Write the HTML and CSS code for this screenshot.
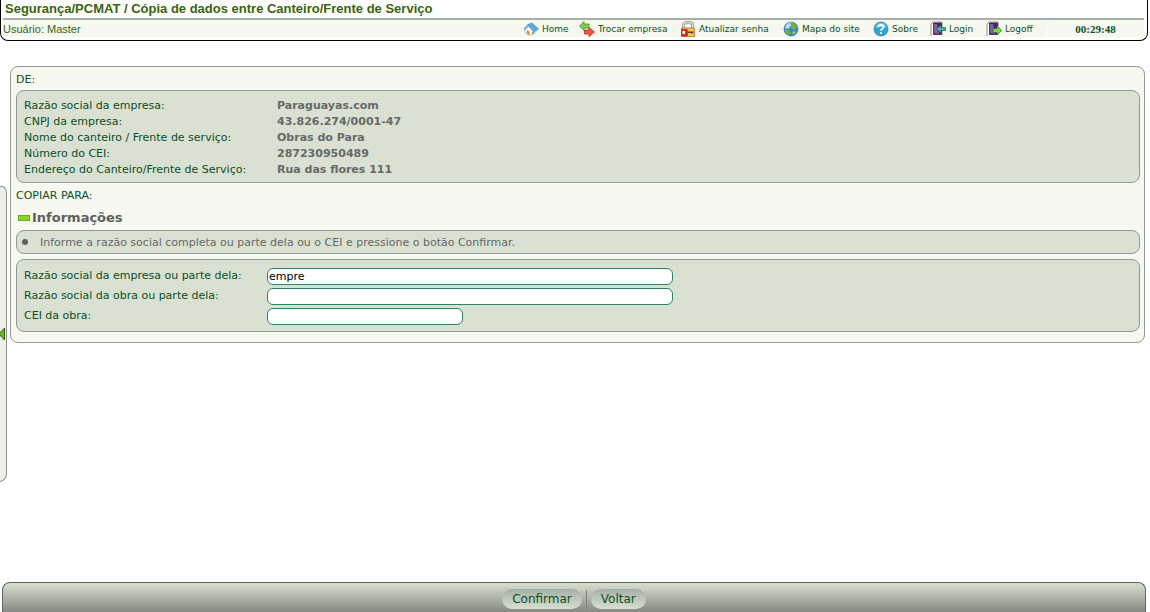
FILE: index.html
```html
<!DOCTYPE html>
<html lang="pt-BR">
<head>
<meta charset="utf-8">
<title>Segurança/PCMAT</title>
<link rel="stylesheet" href="styles.css">
</head>
<body>
<header class="header">
  <h1 class="title">Segurança/PCMAT / Cópia de dados entre Canteiro/Frente de Serviço</h1>
  <div class="toolbar">
    <span class="user">Usuário: Master</span>
    <nav class="menu">
      <a href="#"><svg class="icon" viewBox="0 0 16 16"><path fill="#f1f3f2" stroke="#a9adb0" stroke-width=".6" d="M2 7.500l4-2 7 2v4l-6 3-5-3z"/><path fill="#5fa9dc" stroke="#3b80b5" stroke-width=".6" d="M5 3.500l4-1.500 6.500 6-5 3z"/><path fill="#8cc6ea" stroke="#3b80b5" stroke-width=".6" d="M5 3.500L.8 8l1.200.6L5.500 5z"/><path fill="#d99443" d="M4 9l2.500 1.500v4L4 13z"/><path fill="#6d95b5" d="M9 11.500l2-1v2l-2 1z"/></svg>Home</a>
      <a href="#"><svg class="icon" viewBox="0 0 16 16"><path fill="#7fcc45" stroke="#3f942c" stroke-width=".8" d="M.5 5L5 .5V3h5v4H5v2.500z"/><path fill="#f0554b" stroke="#c9291f" stroke-width=".8" d="M5.500 9H10V6.500l5.500 4.500-5.500 4.500V13H5.500z"/></svg>Trocar empresa</a>
      <a href="#"><svg class="icon" viewBox="0 0 16 16"><path fill="none" stroke="#8d8d8d" stroke-width="2.800" d="M3.500 8V4q0-2.500 4.500-2.500T12.500 4v4"/><path fill="none" stroke="#dedede" stroke-width="1.400" d="M3.500 8V4q0-2.500 4.500-2.500T12.500 4v4"/><path fill="#f5c55a" stroke="#a7772b" stroke-width=".8" d="M1.500 7h13v8.500h-13z"/><path fill="#d72f22" d="M1 8h6l1 1.500v5L7 15.500H1z"/><path fill="#fff" d="M2.500 10H5v3H2.500z"/><path fill="#6b3b20" d="M8 10.500h5.500V12h-1v1h-1v-1H8z"/></svg>Atualizar senha</a>
      <a href="#"><svg class="icon" viewBox="0 0 16 16"><circle cx="8" cy="8" r="7" fill="#3b83d6" stroke="#2c61a8" stroke-width=".6"/><path fill="#b7dcf7" d="M3 4q3-4 7-2L8 5 5 8 2 7z"/><path fill="#6eb536" d="M7 2q5-1 7 4l-2 3-3-1-1-3zM2 8l4 1 2 3-2 2.500Q2 13 2 8z"/><path fill="#8fcf4a" d="M10 10l3 1-2 2.500-2-1z"/></svg>Mapa do site</a>
      <a href="#"><svg class="icon" viewBox="0 0 16 16"><circle cx="8" cy="8" r="7" fill="#2aa5d8" stroke="#2580b4" stroke-width=".7"/><path fill="#79cdec" d="M2.500 7q1-5 5.500-5t5.500 5q-6-2-11 0z"/><path fill="none" stroke="#fff" stroke-width="1.800" d="M5.500 6q0-2 2.500-2t2.500 2q0 1-1.500 2-1 .6-1 1.800"/><circle cx="8" cy="12" r="1.100" fill="#fff"/></svg>Sobre</a>
      <a href="#"><svg class="icon" viewBox="0 0 16 16"><path fill="#fff" stroke="#777" stroke-width=".8" d="M1 15V3l2-2h9v13"/><path fill="#49275f" stroke="#24152e" stroke-width=".7" d="M3.500 2h8v11.500h-8z"/><path fill="#845aa0" d="M4 3h3l2 10-5-1z"/><path fill="#55b1a3" stroke="#1c665c" stroke-width=".8" d="M6.500 8L11 4v2.500h4.500v3H11V12z"/></svg>Login</a>
      <a href="#"><svg class="icon" viewBox="0 0 16 16"><path fill="#fff" stroke="#777" stroke-width=".8" d="M1 15V3l2-2h9v13"/><path fill="#49275f" stroke="#24152e" stroke-width=".7" d="M3.500 2h8v11.500h-8z"/><path fill="#845aa0" d="M4 3h3l2 10-5-1z"/><path fill="#79d83c" stroke="#26751b" stroke-width=".8" d="M15.500 9.500L11 5v2.500H7v4h4V14z"/></svg>Logoff</a>
    </nav>
    <time class="clock">00:29:48</time>
  </div>
</header>

<button class="drawer" type="button" aria-label="Abrir menu"><svg class="arrow" viewBox="0 0 5 12"><path fill="#6cb829" stroke="#36551d" d="M4.500 0v12L-1 6z"/></svg></button>

<main class="card">
  <h2 class="caption">DE:</h2>
  <dl class="panel details">
    <dt>Razão social da empresa:</dt><dd>Paraguayas.com</dd>
    <dt>CNPJ da empresa:</dt><dd>43.826.274/0001-47</dd>
    <dt>Nome do canteiro / Frente de serviço:</dt><dd>Obras do Para</dd>
    <dt>Número do CEI:</dt><dd>287230950489</dd>
    <dt>Endereço do Canteiro/Frente de Serviço:</dt><dd>Rua das flores 111</dd>
  </dl>
  <h2 class="caption">COPIAR PARA:</h2>
  <h3 class="info"><span class="dash"></span>Informações</h3>
  <ul class="panel notes">
    <li>Informe a razão social completa ou parte dela ou o CEI e pressione o botão Confirmar.</li>
  </ul>
  <form class="panel form" id="busca">
    <label for="empresa">Razão social da empresa ou parte dela:</label><input id="empresa" type="text" value="empre">
    <label for="obra">Razão social da obra ou parte dela:</label><input id="obra" type="text">
    <label for="cei">CEI da obra:</label><input class="short" id="cei" type="text">
  </form>
</main>

<footer class="actions">
  <button class="action" type="submit" form="busca">Confirmar</button>
  <span class="divider"></span>
  <button class="action" type="button">Voltar</button>
</footer>
</body>
</html>
```
FILE: styles.css
```css
* { box-sizing: border-box; }

body {
  margin: 0;
  min-height: 100vh;
  display: flex;
  flex-direction: column;
  background: #fff;
  color: #0b4f26;
  font: 11px/16px "DejaVu Sans", Verdana, sans-serif;
}

h1, h2, h3, dl, dd, ul { margin: 0; padding: 0; }

.header {
  margin-right: 2px;
  padding: 0 3px 3px 2px;
  border: 1px solid #000;
  border-top: 0;
  border-radius: 0 0 8px 8px;
}

.title {
  padding-left: 2px;
  border-bottom: 2px solid #a6b0a7;
  color: #38640e;
  font: bold 13px/18px "Liberation Sans", Arial, sans-serif;
}

.toolbar {
  display: flex;
  align-items: center;
  height: 17px;
  background: #f6f7ef;
}

.user {
  color: #38640e;
  font: 11px/16px "Liberation Sans", Arial, sans-serif;
}

.menu {
  display: grid;
  grid-template-columns: 56px 101px 103px 90px 57px 56px 60px;
  margin-left: auto;
  border-right: 1px solid #fff;
}

.menu a {
  display: flex;
  align-items: center;
  gap: 3px;
  color: #0b4f26;
  font-size: 9px;
  text-decoration: none;
  white-space: nowrap;
}

.icon { width: 16px; height: 16px; flex: none; }

.clock {
  width: 97px;
  text-align: center;
  font: bold 11px/16px "Liberation Serif", "Times New Roman", serif;
}

.drawer {
  position: absolute;
  top: 186px;
  left: 0;
  width: 7px;
  height: 296px;
  padding: 0;
  border: 1px solid #8f938f;
  border-left: 0;
  border-radius: 0 7px 10px 0 / 0 10px 12px 0;
  background: #ecefe7;
}

.arrow { display: block; width: 5px; height: 12px; }

.card {
  margin: 25px 5px 24px 10px;
  padding: 5px 4px 10px 5px;
  border: 1px solid #959895;
  border-radius: 8px;
  background: #f7f8f0;
}

.caption {
  font-size: 11px;
  font-weight: normal;
  line-height: 16px;
}

.panel {
  border: 1px solid #959895;
  border-radius: 8px;
  background: #dae0d2;
}

.details {
  display: grid;
  grid-template-columns: 253px 1fr;
  margin: 2px 0 5px;
  padding: 7px 7px 4px;
}

.details dd { color: #666b67; font-weight: bold; }

.info {
  display: flex;
  align-items: center;
  gap: 2px;
  margin: 5px 0 4px;
  padding-left: 2px;
  color: #5d625e;
  font-size: 13px;
  line-height: 17px;
}

.dash {
  width: 12px;
  height: 6px;
  border: 1px solid #65ad18;
  background: #91d32c;
}

.notes {
  padding: 4px 5px 2px;
  color: #666b67;
  font-size: 11px;
  line-height: 16px;
  list-style: none;
}

.notes li { display: flex; align-items: center; gap: 12px; }

.notes li::before {
  content: "";
  width: 6px;
  height: 6px;
  margin-bottom: 3px;
  border-radius: 50%;
  background: #5d625e;
}

.form {
  display: grid;
  grid-template-columns: 243px minmax(0, 406px);
  grid-auto-rows: 20px;
  align-items: center;
  margin-top: 5px;
  padding: 6px 7px 5px;
}

.form input {
  width: 100%;
  height: 17px;
  padding: 0 1px;
  border: 1px solid #2f8262;
  border-radius: 6px;
  background: #fff;
  color: #000;
  font: inherit;
}

.form .short { width: 196px; }

.actions {
  display: flex;
  justify-content: center;
  align-items: center;
  gap: 4px;
  margin: auto 4px 0 2px;
  padding: 6px 0 3px;
  border: 1px solid #626562;
  border-bottom: 0;
  border-radius: 8px 8px 0 0;
  background: linear-gradient(#dae0d0, #868983);
}

.action {
  height: 20px;
  padding: 0 10px;
  border: 0;
  border-radius: 10px;
  background: linear-gradient(#a5b0a6, #d8dfd1);
  color: #0b4f26;
  font: 12px/20px "DejaVu Sans", Verdana, sans-serif;
}

.divider { width: 1px; height: 19px; background: #7f837e; }
```
